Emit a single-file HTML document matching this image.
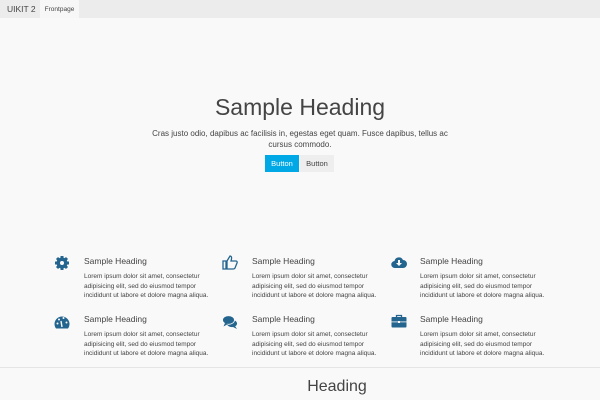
<!DOCTYPE html>
<html><head><style>
*{margin:0;padding:0;box-sizing:border-box}
body{width:600px;height:400px;overflow:hidden;background:#f9f9f9;font-family:"Liberation Sans",sans-serif;color:#444;position:relative}
.nav{position:absolute;left:0;top:0;width:600px;height:18px;background:#ececec}
.brand{position:absolute;left:7px;top:4px;font-size:8.5px;color:#444}
.tab{position:absolute;left:40px;top:0;width:39px;height:18px;background:#f7f7f7;font-size:6.5px;text-align:center;line-height:19px;color:#444}
h1{position:absolute;left:0;width:600px;top:94px;text-align:center;font-weight:normal;font-size:23px;color:#444}
.lead{position:absolute;left:145px;width:310px;top:128px;text-align:center;font-size:8px;line-height:11px;color:#444}
.b1{position:absolute;left:265px;top:155px;width:34px;height:17px;background:#00a8e6;color:#fff;font-size:7.5px;text-align:center;line-height:17px}
.b2{position:absolute;left:300px;top:155px;width:34px;height:17px;background:#eee;color:#444;font-size:7.5px;text-align:center;line-height:17px}
.f h3{position:absolute;font-weight:normal;font-size:8.5px;color:#444;white-space:nowrap}
.f p{position:absolute;font-size:6.5px;line-height:9.5px;color:#444;white-space:nowrap}
.ic{position:absolute;width:16px;height:16px;overflow:visible}
.hr{position:absolute;left:0;top:367px;width:600px;height:1px;background:#e5e5e5}
.h2{position:absolute;left:300px;width:74px;top:378px;text-align:center;font-size:16px;color:#444}
</style></head><body>
<div class="nav"><span class="brand">UIKIT 2</span><div class="tab">Frontpage</div></div>
<h1>Sample Heading</h1>
<div class="lead">Cras justo odio, dapibus ac facilisis in, egestas eget quam. Fusce dapibus, tellus ac cursus commodo.</div>
<div class="b1">Button</div><div class="b2">Button</div>

<div class="f">
<svg class="ic" style="left:54px;top:255px" viewBox="0 0 16 16"><g fill="#24658f"><circle cx="8" cy="8" r="5.5"/><g stroke="#24658f" stroke-width="3"><line x1="8" y1="1" x2="8" y2="15"/><line x1="1" y1="8" x2="15" y2="8"/><line x1="3" y1="3" x2="13" y2="13"/><line x1="13" y1="3" x2="3" y2="13"/></g><circle cx="8" cy="8" r="2" fill="#f9f9f9"/></g></svg>
<h3 style="left:84px;top:256px">Sample Heading</h3>
<p style="left:84px;top:272px">Lorem ipsum dolor sit amet, consectetur<br>adipisicing elit, sed do eiusmod tempor<br>incididunt ut labore et dolore magna aliqua.</p>

<svg class="ic" style="left:222px;top:254px" viewBox="0 0 16 16"><path d="M1 7h3v8H1zM5 7l3-5c1 0 2 1 1.5 3L9 7h5c1 0 1.5 1 1 2l-2 5c-.3.7-1 1-2 1H5z" fill="none" stroke="#24658f" stroke-width="1.3"/></svg>
<h3 style="left:252px;top:256px">Sample Heading</h3>
<p style="left:252px;top:272px">Lorem ipsum dolor sit amet, consectetur<br>adipisicing elit, sed do eiusmod tempor<br>incididunt ut labore et dolore magna aliqua.</p>

<svg class="ic" style="left:391px;top:255px" viewBox="0 0 16 16"><path d="M4 13a3.5 3.5 0 0 1-.5-7A4.5 4.5 0 0 1 12 5a4 4 0 0 1 0 8z" fill="#24658f"/><path d="M7 5h2v3h2l-3 3-3-3h2z" fill="#f9f9f9"/></svg>
<h3 style="left:420px;top:256px">Sample Heading</h3>
<p style="left:420px;top:272px">Lorem ipsum dolor sit amet, consectetur<br>adipisicing elit, sed do eiusmod tempor<br>incididunt ut labore et dolore magna aliqua.</p>

<svg class="ic" style="left:54px;top:314px" viewBox="0 0 16 16"><path d="M2 14.5A7.5 7.5 0 1 1 14 14.5z" fill="#24658f"/><path d="M8 13l-1-6" stroke="#f9f9f9" stroke-width="1.4"/><circle cx="3.5" cy="9.5" r="1" fill="#f9f9f9"/><circle cx="5" cy="5.5" r="1" fill="#f9f9f9"/><circle cx="9.5" cy="4" r="1" fill="#f9f9f9"/><circle cx="12.5" cy="8.5" r="1" fill="#f9f9f9"/></svg>
<h3 style="left:84px;top:314px">Sample Heading</h3>
<p style="left:84px;top:330px">Lorem ipsum dolor sit amet, consectetur<br>adipisicing elit, sed do eiusmod tempor<br>incididunt ut labore et dolore magna aliqua.</p>

<svg class="ic" style="left:222px;top:314px" viewBox="0 0 16 16"><ellipse cx="10" cy="9.5" rx="5.5" ry="4" fill="#24658f" stroke="#f9f9f9" stroke-width="0.8"/><path d="M13 12l2 3-4-2z" fill="#24658f"/><ellipse cx="6.5" cy="6" rx="6" ry="4.3" fill="#24658f" stroke="#f9f9f9" stroke-width="0.8"/><path d="M3 9l-1.5 3.5 4.5-2.5z" fill="#24658f"/></svg>
<h3 style="left:252px;top:314px">Sample Heading</h3>
<p style="left:252px;top:330px">Lorem ipsum dolor sit amet, consectetur<br>adipisicing elit, sed do eiusmod tempor<br>incididunt ut labore et dolore magna aliqua.</p>

<svg class="ic" style="left:391px;top:313px" viewBox="0 0 16 16"><path d="M5.5 4V2.5h5V4" fill="none" stroke="#24658f" stroke-width="1.3"/><rect x="0.5" y="4" width="15" height="10.5" rx="1" fill="#24658f"/><rect x="0.5" y="8.5" width="15" height="0.8" fill="#f9f9f9"/><rect x="7" y="8" width="2" height="2" fill="#f9f9f9"/></svg>
<h3 style="left:420px;top:314px">Sample Heading</h3>
<p style="left:420px;top:330px">Lorem ipsum dolor sit amet, consectetur<br>adipisicing elit, sed do eiusmod tempor<br>incididunt ut labore et dolore magna aliqua.</p>
</div>
<div class="hr"></div>
<div class="h2">Heading</div>
</body></html>
